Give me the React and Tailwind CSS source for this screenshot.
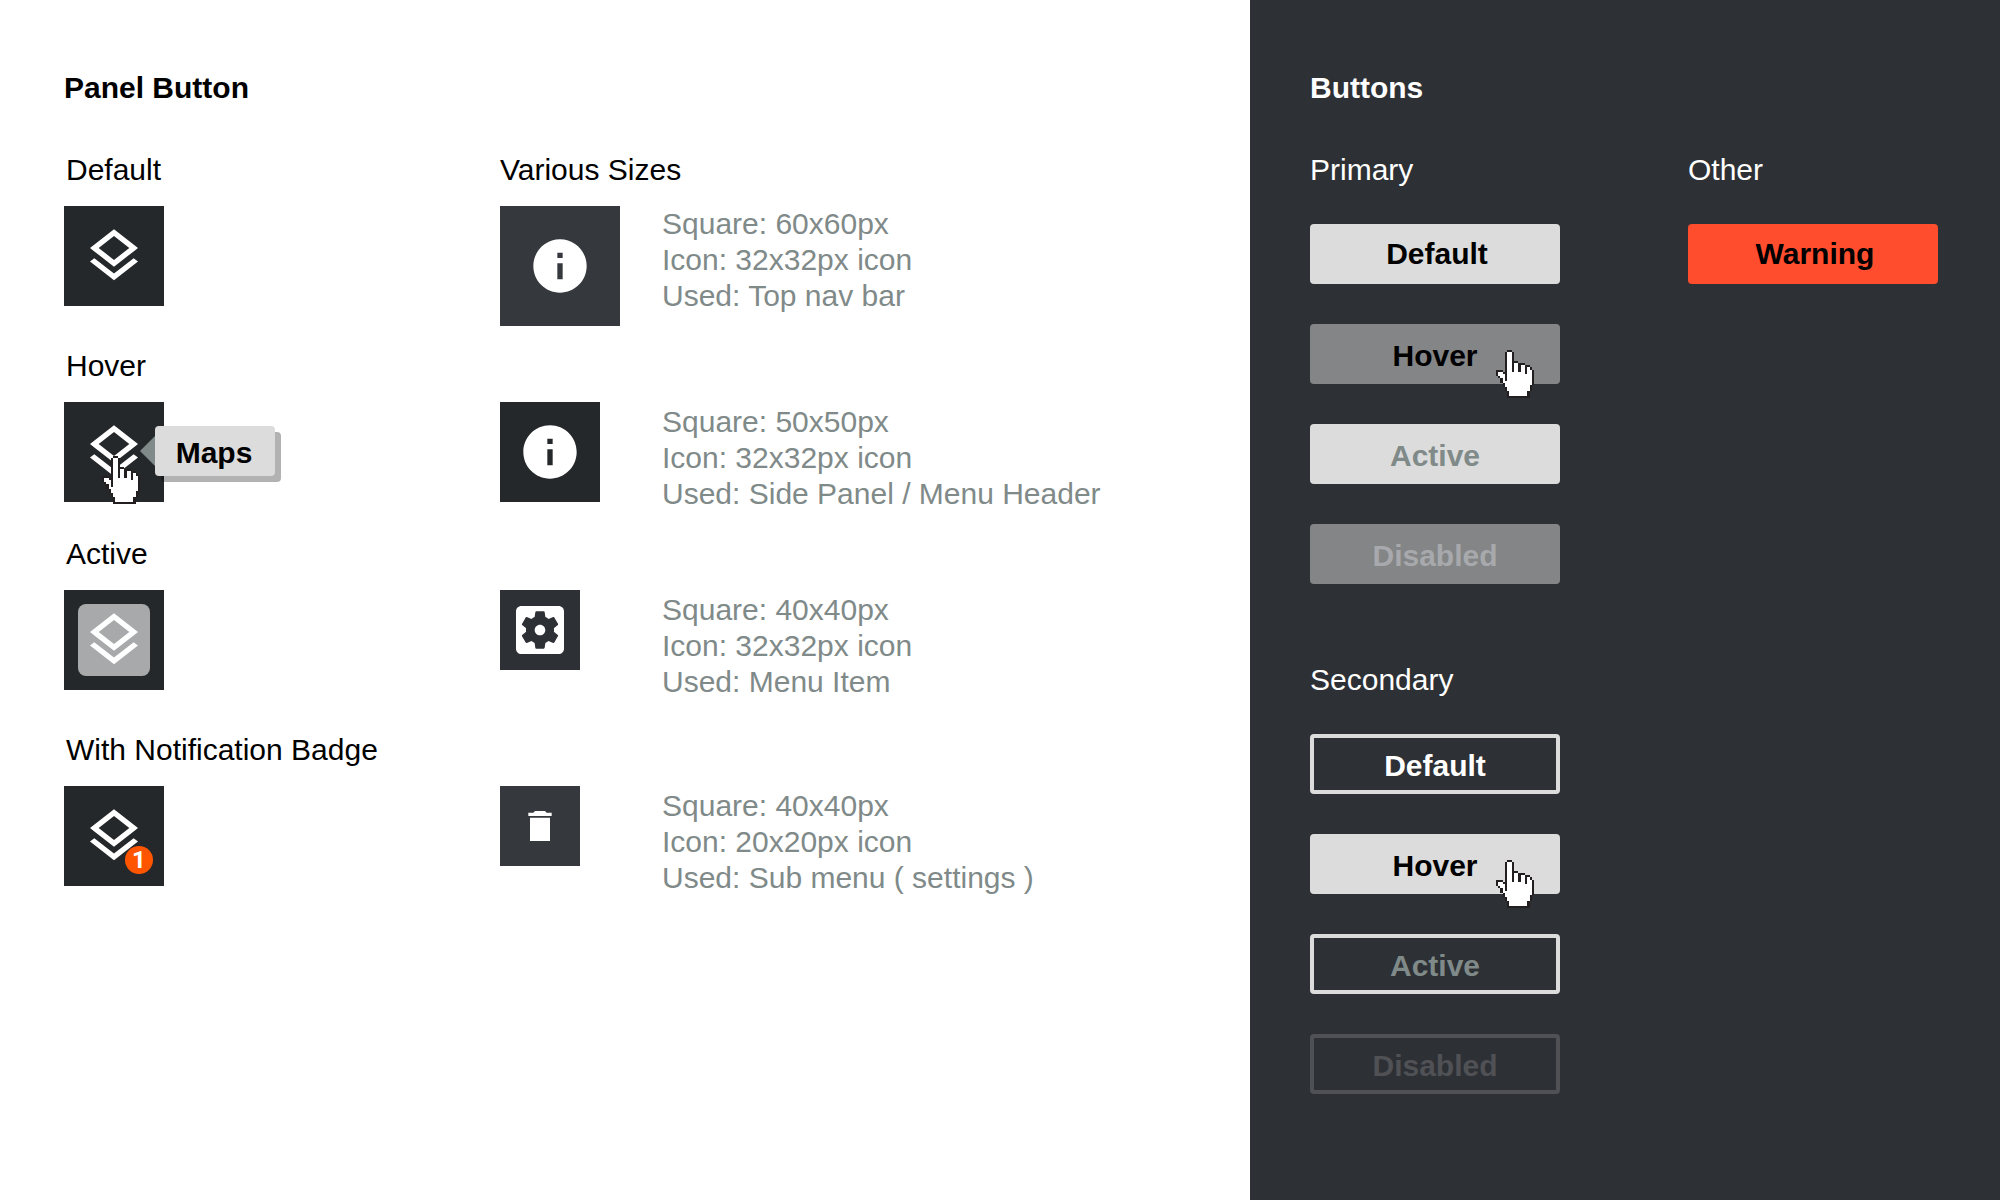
import React from "react";

const HAND = [
  ".....XX..........",
  "....XooX.........",
  "....XooX.........",
  "....XooX.........",
  "....XooX.........",
  "....XooXXX.......",
  "....XooXooXXX....",
  "....XooXooXooXX..",
  "....XooXooXooXoX.",
  "XXX.XooXooXooXooX",
  "XooXXooooooooXooX",
  "XoooXoooooooooooX",
  ".XooXoooooooooooX",
  "..XoXoooooooooooX",
  "..XoooooooooooooX",
  "...XooooooooooooX",
  "...XoooooooooooX.",
  "....XooooooooooX.",
  "....XooooooooooX.",
  ".....XooooooooX..",
  ".....XooooooooX..",
  ".....XXXXXXXXXX..",
];

// One sub-path of unit squares per equal cell in the cursor bitmap.
function cells(mark) {
  return HAND.flatMap((row, y) =>
    [...row].map((c, x) => (c === mark ? `M${x} ${y}h1v1h-1z` : "")),
  ).join("");
}
const HAND_LINE = cells("X");
const HAND_FILL = cells("o");

function HandCursor({ className }) {
  return (
    <svg
      viewBox="0 0 17 22"
      preserveAspectRatio="none"
      shapeRendering="crispEdges"
      aria-hidden="true"
      className={`pointer-events-none absolute z-10 h-12 w-[38px] ${className}`}
    >
      <path d={HAND_LINE} fill="#231f20" />
      <path d={HAND_FILL} fill="#fff" />
    </svg>
  );
}

const ICONS = {
  layers:
    "M11.99 18.54l-7.37-5.73L3 14.07l9 7 9-7-1.63-1.27zM12 16l7.36-5.73L21 9l-9-7-9 7 1.63 1.27zm0-11.47L17.74 9 12 13.47 6.26 9z",
  info: "M12 2C6.48 2 2 6.48 2 12s4.48 10 10 10 10-4.48 10-10S17.52 2 12 2zm1 15h-2v-6h2zm0-8h-2V7h2z",
  settings:
    "M12 10c-1.1 0-2 .9-2 2s.9 2 2 2 2-.9 2-2-.9-2-2-2zm7-7H5c-1.11 0-2 .9-2 2v14c0 1.1.89 2 2 2h14c1.11 0 2-.9 2-2V5c0-1.1-.89-2-2-2zm-1.75 9c0 .23-.02.46-.05.68l1.48 1.16c.13.11.17.3.08.45l-1.4 2.42c-.09.15-.27.21-.43.15l-1.74-.7c-.36.28-.76.51-1.18.69l-.26 1.85c-.03.17-.18.3-.35.3h-2.8c-.17 0-.32-.13-.35-.29l-.26-1.85c-.43-.18-.82-.41-1.18-.69l-1.74.7c-.16.06-.34 0-.43-.15l-1.4-2.42c-.09-.15-.05-.34.08-.45l1.48-1.16c-.03-.23-.05-.46-.05-.69 0-.23.02-.46.05-.68l-1.48-1.16c-.13-.11-.17-.3-.08-.45l1.4-2.42c.09-.15.27-.21.43-.15l1.74.7c.36-.28.76-.51 1.18-.69l.26-1.85c.03-.17.18-.3.35-.3h2.8c.17 0 .32.13.35.29l.26 1.85c.43.18.82.41 1.18.69l1.74-.7c.16-.06.34 0 .43.15l1.4 2.42c.09.15.05.34-.08.45l-1.48 1.16c.03.23.05.46.05.69z",
  trash: "M9 3h6l1 1h3v2H5V4h3zM6 7h12v14H6z",
};

function Icon({ name, className = "size-16" }) {
  return (
    <svg viewBox="0 0 24 24" fill="currentColor" aria-hidden="true" className={className}>
      <path d={ICONS[name]} />
    </svg>
  );
}

function PanelButton({ label, className = "size-25 bg-[#24282a]", children }) {
  return (
    <button
      type="button"
      aria-label={label}
      className={`relative flex shrink-0 items-center justify-center text-white ${className}`}
    >
      {children}
    </button>
  );
}

function Row({ state, button, sizeTitle, sizeButton, notes, className, notesClass = "pt-0.5" }) {
  return (
    <section className={`grid grid-cols-[436px_1fr] ${className}`}>
      <div>
        <h2 className="mb-[18px] pl-0.5">{state}</h2>
        {button}
      </div>
      <div>
        <h2 className="mb-[18px] h-9">{sizeTitle}</h2>
        <div className="grid grid-cols-[162px_1fr]">
          {sizeButton}
          <div className={`whitespace-nowrap text-[#7f8a89] ${notesClass}`}>
            {notes.map((n) => (
              <p key={n}>{n}</p>
            ))}
          </div>
        </div>
      </div>
    </section>
  );
}

function Button({ children, className, cursor, disabled }) {
  return (
    <div className="relative w-[250px]">
      <button
        type="button"
        disabled={disabled}
        className={`flex h-15 w-full items-center justify-center rounded font-bold ${className}`}
      >
        {children}
      </button>
      {cursor && <HandCursor className="top-[26px] right-[26px]" />}
    </div>
  );
}

export default function App() {
  return (
    <div className="flex min-h-screen bg-white font-['Liberation_Sans',Arial,sans-serif] text-[30px] leading-9 text-black">
      <main className="w-5/8 shrink-0 pt-[70px] pl-16">
        <h1 className="mb-[46px] font-bold">Panel Button</h1>

        <Row
          className="mb-[22px]"
          state="Default"
          button={
            <PanelButton label="Maps">
              <Icon name="layers" />
            </PanelButton>
          }
          sizeTitle="Various Sizes"
          sizeButton={
            <PanelButton label="Info" className="size-30 bg-[#35383c]">
              <Icon name="info" />
            </PanelButton>
          }
          notesClass=""
          notes={["Square: 60x60px", "Icon: 32x32px icon", "Used: Top nav bar"]}
        />

        <Row
          className="mb-6"
          state="Hover"
          button={
            <div className="relative size-25">
              <PanelButton label="Maps, hovered">
                <Icon name="layers" />
              </PanelButton>
              <div
                role="tooltip"
                className="absolute top-6 left-[91px] flex h-[50px] w-30 items-center justify-center rounded bg-[#dcdcdc] pt-1 pr-0.5 font-bold shadow-[6px_6px_0_rgba(0,0,0,0.3)]"
              >
                <svg
                  viewBox="0 0 15 30"
                  aria-hidden="true"
                  className="absolute top-[10px] right-full h-[30px] w-[15px]"
                >
                  <path d="M15 0v30L0 15z" fill="#7f8a89" />
                </svg>
                Maps
              </div>
              <HandCursor className="top-[54px] left-[38px]" />
            </div>
          }
          sizeButton={
            <PanelButton label="Info">
              <Icon name="info" />
            </PanelButton>
          }
          notes={["Square: 50x50px", "Icon: 32x32px icon", "Used: Side Panel / Menu Header"]}
        />

        <Row
          className="mb-8"
          state="Active"
          button={
            <PanelButton label="Maps, active">
              <span className="flex size-18 items-center justify-center rounded-lg bg-[#a7a9aa]">
                <Icon name="layers" />
              </span>
            </PanelButton>
          }
          sizeButton={
            <PanelButton label="Settings" className="size-20 bg-[#2d3035]">
              <Icon name="settings" />
            </PanelButton>
          }
          notes={["Square: 40x40px", "Icon: 32x32px icon", "Used: Menu Item"]}
        />

        <Row
          className=""
          state="With Notification Badge"
          button={
            <PanelButton label="Maps, 1 notification">
              <Icon name="layers" />
              <span className="absolute right-[11px] bottom-3 flex size-7 items-center justify-center rounded-full bg-[#ff5500] font-[Roboto,sans-serif] text-2xl font-bold">
                1
              </span>
            </PanelButton>
          }
          sizeButton={
            <PanelButton label="Delete" className="size-20 bg-[#35383c]">
              <Icon name="trash" className="size-10" />
            </PanelButton>
          }
          notes={["Square: 40x40px", "Icon: 20x20px icon", "Used: Sub menu ( settings )"]}
        />
      </main>

      <aside className="flex-1 bg-[#2d3035] pt-[70px] pl-15 text-white">
        <h1 className="mb-[46px] font-bold">Buttons</h1>
        <div className="flex gap-32">
          <div>
            <section className="mb-[78px] flex flex-col gap-10">
              <h2 className="-mb-1">Primary</h2>
              <Button className="bg-[#dcdcdc] pl-1 text-black">Default</Button>
              <Button className="bg-[#848586] pt-1 text-black" cursor>
                Hover
              </Button>
              <Button className="bg-[#dcdcdc] pt-1 text-[#7f8a89]">Active</Button>
              <Button className="bg-[#848586] pt-1 text-[#a7a9ac]" disabled>
                Disabled
              </Button>
            </section>
            <section className="flex flex-col gap-10">
              <h2 className="-mb-1">Secondary</h2>
              <Button className="border-4 border-[#dcdcdc] pt-1 text-white">Default</Button>
              <Button className="bg-[#dcdcdc] pt-1 text-black" cursor>
                Hover
              </Button>
              <Button className="border-4 border-[#dcdcdc] pt-1 text-[#7f8a89]">Active</Button>
              <Button className="border-4 border-[#505155] pt-1 text-[#505155]" disabled>
                Disabled
              </Button>
            </section>
          </div>
          <section>
            <h2 className="mb-9">Other</h2>
            <Button className="bg-[#ff4d2e] pl-1 text-black">Warning</Button>
          </section>
        </div>
      </aside>
    </div>
  );
}
